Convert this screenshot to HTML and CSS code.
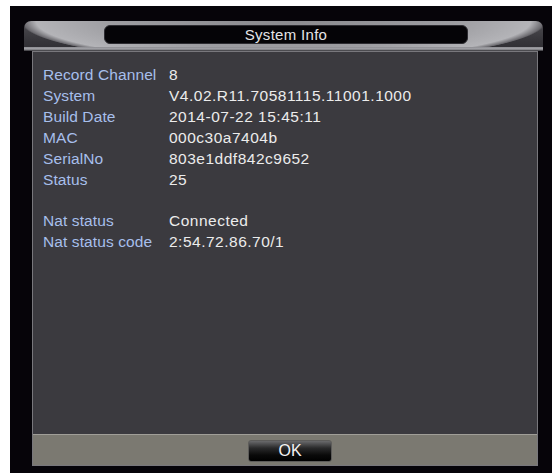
FILE: index.html
```html
<!DOCTYPE html>
<html>
<head>
<meta charset="utf-8">
<title>System Info</title>
<link rel="stylesheet" href="styles.css">
</head>
<body>
<div class="screen">
  <div class="dialog">
    <div class="titlebar">
      <div class="pill">System Info</div>
    </div>
    <div class="body">
      <div class="panel">
        <div class="row"><span class="label">Record Channel</span><span class="value">8</span></div>
        <div class="row"><span class="label">System</span><span class="value">V4.02.R11.70581115.11001.1000</span></div>
        <div class="row"><span class="label">Build Date</span><span class="value">2014-07-22 15:45:11</span></div>
        <div class="row"><span class="label">MAC</span><span class="value">000c30a7404b</span></div>
        <div class="row"><span class="label">SerialNo</span><span class="value">803e1ddf842c9652</span></div>
        <div class="row"><span class="label">Status</span><span class="value">25</span></div>
        <div class="row spacer"></div>
        <div class="row"><span class="label">Nat status</span><span class="value">Connected</span></div>
        <div class="row"><span class="label">Nat status code</span><span class="value">2:54.72.86.70/1</span></div>
      </div>
      <div class="footer">
        <button class="ok">OK</button>
      </div>
    </div>
  </div>
</div>
</body>
</html>
```

FILE: styles.css
```css
html, body {
  margin: 0;
  padding: 0;
  background: #ffffff;
}

body {
  font-family: "Liberation Sans", Arial, sans-serif;
}

.screen {
  margin: 6px 0 0 10px;
  width: 542px;
  height: 467px;
  background: #060409;
  padding-top: 15px;
  box-sizing: border-box;
}

.dialog {
  margin: 0 9px 0 14px;
}

/* chrome title bar with a curved highlight */
.titlebar {
  height: 30px;
  border-radius: 7px 7px 0 0;
  display: flex;
  align-items: flex-start;
  background:
    linear-gradient(to bottom, transparent 26px, #8d8d92 26px, #a3a3a8 28px, #6c6c70 29px, #2a292e 30px),
    radial-gradient(263px 42px at 50% 0, #8a8a8e 0%, #9d9da1 65%, #b4b4b8 94%, #6a696e 99%, transparent 100%),
    linear-gradient(to bottom, #4e4d52, #38373c 60%, #2e2d32);
}

.pill {
  margin: 4px 0 0 80px;
  width: 364px;
  height: 19px;
  box-sizing: border-box;
  border-radius: 6px;
  background: #050407;
  border: 1px solid #2d2c31;
  color: #e4e4e6;
  font-size: 15px;
  line-height: 17px;
  text-align: center;
  letter-spacing: 0.3px;
}

.body {
  margin: 0 5px 0 8px;
  border: 1px solid #78777c;
}

.panel {
  height: 382px;
  box-sizing: border-box;
  background: #3b3a3f;
  padding: 12px 0 0 10px;
}

.row {
  display: flex;
  height: 21px;
  line-height: 21px;
  font-size: 15.5px;
  white-space: nowrap;
}

.row.spacer {
  height: 20px;
}

.label {
  width: 126px;
  color: #a7bfec;
  letter-spacing: 0.1px;
}

.value {
  color: #ececec;
  letter-spacing: 0.5px;
}

.footer {
  height: 31px;
  box-sizing: border-box;
  border-top: 1px solid #a09e98;
  background: #7b7971;
  display: flex;
  justify-content: center;
  padding: 5px 0 0 10px;
}

.ok {
  width: 84px;
  height: 22px;
  padding: 0;
  border: 1px solid #5d5c5a;
  border-radius: 3px;
  background: linear-gradient(to bottom, #6a6a6c 0%, #2a2a2b 35%, #0a0a0a 70%, #000 100%);
  color: #f2f2f2;
  font-family: "Liberation Sans", Arial, sans-serif;
  font-size: 16px;
  line-height: 20px;
}
```
